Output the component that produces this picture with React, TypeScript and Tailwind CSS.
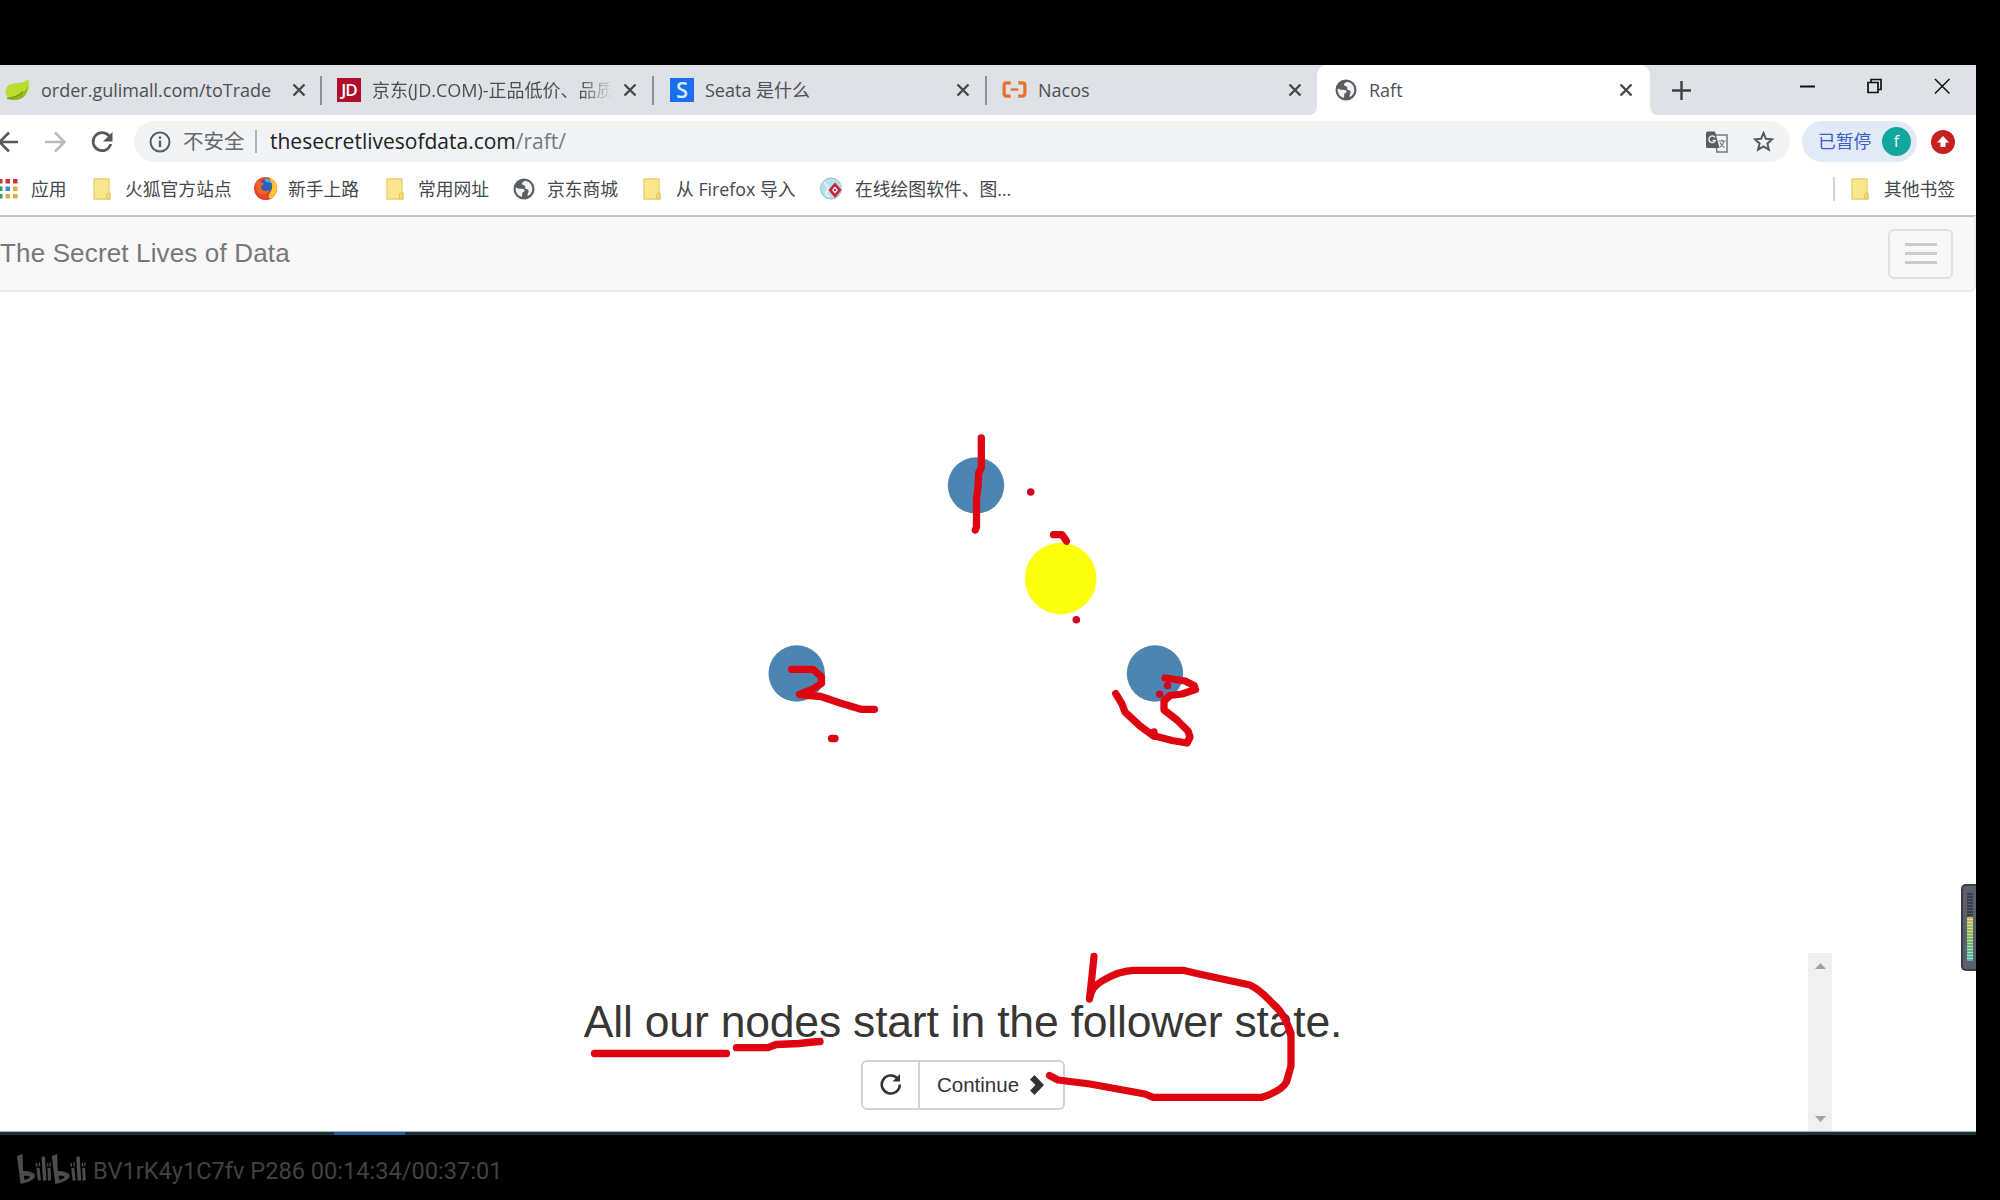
import type { ReactNode } from "react";

const uiFont = "font-['Open_Sans','Noto_Sans_CJK_SC',sans-serif]";

function CloseX() {
  return (
    <svg className="size-[14px] shrink-0" viewBox="0 0 14 14" fill="none" stroke="#45484c" strokeWidth="2.4">
      <path d="M1.5 1.5 12.5 12.5M12.5 1.5 1.5 12.5" />
    </svg>
  );
}

function Globe() {
  return (
    <svg className="h-[22px] w-[22px] shrink-0" viewBox="0 0 22 22">
      <circle cx="11" cy="11" r="10.5" fill="#5a5e62" />
      <path d="M2.800 9.500c3 2 6 .8 8 1.800 1.800 1 .6 2.500-.8 3-1.500.7-.5 2-1 4.500C5.500 18.500 1.800 14 2.800 9.500z" fill="#f1f2f3" />
      <path d="M12.500 2.700c-2.500 1-3.500 1.300-3.500 3 0 1.500 2 1 3 2.200.8 1.200-.5 2.600 1.500 3.200s2.300 1.400 2 2.900c-.3 1.200-1 1.800-1 4 3-1 4.800-4 4.800-7 0-4.500-3-7.500-6.800-8.300z" fill="#f1f2f3" />
    </svg>
  );
}

function Folder() {
  return (
    <svg className="h-[22px] w-[18px] shrink-0" viewBox="0 0 18 22">
      <path d="M1 1h15v13.500l1 1V21H1z" fill="#fce68d" stroke="#e6cf6c" strokeWidth="1.300" />
      <path d="M13.500 21v-5l1.500-1.500 2 1V21z" fill="#f6da70" stroke="#e0c75c" />
    </svg>
  );
}

function Tab({ className, icon, title, titleClass }: { className: string; icon: ReactNode; title: string; titleClass: string }) {
  return (
    <div className={"flex h-[50px] shrink-0 items-center pb-px " + className}>
      {icon}
      <span className={"overflow-hidden whitespace-nowrap pt-[2px] text-[#4c5054] " + titleClass}>{title}</span>
      <CloseX />
    </div>
  );
}

const divider = <div className="h-[29px] w-[2px] shrink-0 bg-[#8d9195]" />;

function TabBar() {
  return (
    <div className="flex h-[50px] items-center bg-[#dee1e5]">
      <Tab
        className="w-[320px] pl-[4px]"
        icon={
          <svg className="h-[24px] w-[26px] shrink-0" viewBox="0 0 26 24">
            <path d="M24.500 1C26 10 24 21 12 21.500 5 22 1 18 1.500 13 2 6 9 5.500 15 5c4-.4 7-1.500 9.500-4z" fill="#b9de2e" />
            <path d="M3 20.500c8 .5 17-3 21-13-1 9-5 14.500-13 14.500-3 0-6-.5-8-1.500z" fill="#8cb822" />
            <path d="M3 20.500c7-.5 12-2.500 16-7" stroke="#6f9a18" strokeWidth="1.500" fill="none" />
          </svg>
        }
        title="order.gulimall.com/toTrade"
        titleClass="ml-[11px] mr-[20px] w-[231px] text-[18px]"
      />
      {divider}
      <Tab
        className="w-[330px] pl-[15px]"
        icon={<div className="flex size-[24px] shrink-0 items-center justify-center bg-[#b00f2c] font-['Open_Sans'] text-[17px] font-semibold tracking-[-1px] text-white">JD</div>}
        title="京东(JD.COM)-正品低价、品质"
        titleClass="ml-[11px] mr-[11px] w-[240px] text-[18px] [mask-image:linear-gradient(to_right,black_87%,transparent)]"
      />
      {divider}
      <Tab
        className="w-[331px] pl-[16px]"
        icon={<div className="flex size-[24px] shrink-0 items-center justify-center bg-[#1a6ff0] font-['Open_Sans'] text-[22px] font-semibold text-[#d8ecff]">S</div>}
        title="Seata 是什么"
        titleClass="ml-[11px] mr-[11px] w-[240px] text-[18px]"
      />
      {divider}
      <Tab
        className="w-[330px] pl-[15px]"
        icon={
          <svg className="h-[17px] w-[25px] shrink-0" viewBox="0 0 26 18" fill="none" stroke="#e8702a" strokeWidth="3.400">
            <path d="M9 2H5Q2 2 2 5v8q0 3 3 3h4M17 2h4q3 0 3 3v8q0 3-3 3h-4" />
            <path d="M9 9h8" strokeWidth="2.500" />
          </svg>
        }
        title="Nacos"
        titleClass="ml-[11px] mr-[9px] w-[241px] text-[18px]"
      />
      <div className="relative w-[333px] shrink-0">
        <svg className="absolute -left-[9px] bottom-0 size-[9px]" viewBox="0 0 9 9"><path d="M9 0v9H0Q9 9 9 0z" fill="#fff" /></svg>
        <svg className="absolute -right-[9px] bottom-0 size-[9px]" viewBox="0 0 9 9"><path d="M0 0v9h9Q0 9 0 0z" fill="#fff" /></svg>
        <div className="h-[50px] rounded-t-[10px] bg-white">
          <Tab className="pl-[18px]" icon={<Globe />} title="Raft" titleClass="ml-[12px] mr-[11px] w-[239px] text-[18px]" />
        </div>
      </div>
      <svg className="ml-[22px] size-[19px] shrink-0" viewBox="0 0 19 19" stroke="#3c4043" strokeWidth="2.400">
        <path d="M9.500 0v19M0 9.500h19" />
      </svg>
      <svg className="mb-[8px] ml-[109px] h-[16px] w-[150px] shrink-0" viewBox="0 0 150 16" stroke="#111" fill="none" strokeWidth="1.700">
        <path d="M0 8.500h15" strokeWidth="2" />
        <path d="M68 4.500h10v10H68zM71 4V1.500h10v10h-2.500" />
        <path d="M135 1l14.500 14.500M149.500 1 135 15.500" strokeWidth="1.500" />
      </svg>
    </div>
  );
}

function Toolbar() {
  return (
    <div className="flex h-[53px] items-center bg-white">
      <svg className="h-[24px] w-[114px] shrink-0" viewBox="0 0 114 24" fill="none" stroke="#55585c" strokeWidth="2.500">
        <path d="M18 12H0M9 2.500-.5 12 9 21.500" />
        <path d="M45 12h18M55 2.500 64.500 12 55 21.500" stroke="#b9bbbd" />
        <path d="M109.500 6.500A9 9 0 1 0 110.800 14" strokeWidth="2.700" />
        <path d="M112.500 2v9.500h-9.500z" fill="#55585c" stroke="none" />
      </svg>
      <div className="ml-[20px] flex h-[41px] w-[1656px] shrink-0 items-center rounded-full bg-[#f1f3f4] pl-[15px]">
        <svg className="size-[22px] shrink-0" viewBox="0 0 22 22" fill="none" stroke="#5a5e62" strokeWidth="2">
          <circle cx="11" cy="11" r="9.500" />
          <path d="M11 9.500V16M11 5.500v2.300" strokeWidth="2.400" />
        </svg>
        <span className="ml-[12px] w-[62px] shrink-0 whitespace-nowrap text-[20.500px] text-[#65696d]">不安全</span>
        <div className="ml-[10px] h-[23px] w-[2px] bg-[#b0b3b6]" />
        <span className="ml-[13px] grow whitespace-nowrap text-[21px] text-[#202124]">
          thesecretlivesofdata.com<span className="text-[#777b7f]">/raft/</span>
        </span>
        <svg className="h-[22px] w-[22px] shrink-0" viewBox="0 0 22 22">
          <path d="M9 4h12V21H11z" fill="#f4f5f6" stroke="#74777a" strokeWidth="1.500" />
          <path d="M1.500.5H9l4.500 16.500h-12Q0 17 0 15.500V2Q0 .5 1.500.5z" fill="#5a5e62" />
          <path d="M9 6.500A3.300 3.300 0 1 0 9.300 9.500H6.500" stroke="#e4e6e8" strokeWidth="1.500" fill="none" />
          <path d="M12.500 10h7M16 8.500V10M18 10c-.5 3-2.500 5-4 6M14 11.500c1 2.500 3 4 4.500 5" stroke="#74777a" strokeWidth="1.200" fill="none" />
        </svg>
        <svg className="ml-[25px] mr-[16px] size-[21px] shrink-0" viewBox="0 0 21 21" fill="none" stroke="#55585c" strokeWidth="2">
          <path d="M10.500 2 12.900 7.800 19.200 8.300 14.400 12.400 15.900 18.600 10.500 15.300 5.100 18.600 6.600 12.400 1.800 8.300 8.100 7.800z" />
        </svg>
      </div>
      <div className="ml-[12px] flex h-[41px] w-[115px] shrink-0 items-center rounded-full bg-[#e2eaf8] pl-[16px]">
        <span className="w-[54px] whitespace-nowrap text-[17.800px] text-[#3a5fc4]">已暂停</span>
        <div className="ml-[10px] flex size-[29px] items-center justify-center rounded-full bg-[#12a79d] pb-px text-[16px] text-white">f</div>
      </div>
      <svg className="ml-[14px] size-[24px] shrink-0" viewBox="0 0 24 24">
        <circle cx="12" cy="12" r="12" fill="#c5221f" />
        <path d="M12 6l6 6.500h-3.500V17h-5v-4.500H6z" fill="#fff" />
      </svg>
    </div>
  );
}

function BookmarkText({ className, children }: { className: string; children: ReactNode }) {
  return <span className={"shrink-0 whitespace-nowrap pt-[2px] text-[17.800px] text-[#45484c] " + className}>{children}</span>;
}

function Bookmarks() {
  return (
    <div className="flex h-[47px] items-center bg-white pb-[6px]">
      <svg className="h-[20px] w-[18px] shrink-0" viewBox="0 0 18 20">
        <path d="M-2 0h4.500v4.500H-2zM5.500 0H10v4.500H5.500zM13 0h4.500v4.500H13z" fill="#c9303e" />
        <path d="M-2 7.500h4.500V12H-2zM-2 15h4.500v4.500H-2z" fill="#2f9d5c" />
        <path d="M5.500 7.500H10V12H5.500z" fill="#3f86d8" />
        <path d="M13 7.500h4.500V12H13zM5.500 15H10v4.500H5.500zM13 15h4.500v4.500H13z" fill="#e3ab45" />
      </svg>
      <BookmarkText className="ml-[13px] w-[62px]">应用</BookmarkText>
      <Folder />
      <BookmarkText className="ml-[14px] w-[129px]">火狐官方站点</BookmarkText>
      <svg className="size-[23px] shrink-0" viewBox="0 0 23 23">
        <circle cx="11.500" cy="11.500" r="11.500" fill="#ea452b" />
        <path d="M15 .7A11.500 11.500 0 0 1 18 21c-4 1-4-2-2-5s3-8-1-15.300z" fill="#fdc62f" />
        <path d="M11 2c5 0 8 4 7 9s-6 6-9 3S5 4 11 2z" fill="#2c62b4" />
        <path d="M10 1.500c3-.5 6 1 7.500 4.500L12 5z" fill="#43b3e6" />
        <path d="M3 3.500C5 5 8 5 10 7c-3 1-3.500 3-2.500 5 2 3.500 6 1.500 8 1-1.500 4-6 5.500-10 3.500C2 14 1.500 9 3 3.500z" fill="#f4642a" />
      </svg>
      <BookmarkText className="ml-[11px] w-[98px]">新手上路</BookmarkText>
      <Folder />
      <BookmarkText className="ml-[14px] w-[95px]">常用网址</BookmarkText>
      <Globe />
      <BookmarkText className="ml-[12px] w-[96px]">京东商城</BookmarkText>
      <Folder />
      <BookmarkText className="ml-[15px] w-[144px]">从 Firefox 导入</BookmarkText>
      <svg className="size-[23px] shrink-0" viewBox="0 0 23 23">
        <circle cx="11" cy="11.500" r="10.500" fill="#b9dfe8" stroke="#8fc0cc" />
        <path d="M4 6c4 1 5 5 3 8s0 5 3 6" stroke="#e3f3f6" strokeWidth="2" fill="none" />
        <path d="M15 5.500l6.500 7.500-6.500 8-6.500-8z" fill="#c8243c" />
        <path d="M15 9.500l3 3.500-3 3.500-3-3.500z" fill="#fff" />
        <circle cx="15" cy="13" r="1.300" fill="#c8243c" />
      </svg>
      <BookmarkText className="ml-[12px] grow">在线绘图软件、图...</BookmarkText>
      <div className="h-[24px] w-[2px] bg-[#d3d5d8]" />
      <div className="ml-[16px] flex items-center">
        <Folder />
      </div>
      <BookmarkText className="ml-[15px] w-[92px]">其他书签</BookmarkText>
    </div>
  );
}

function Stage() {
  return (
    <svg className="pointer-events-none absolute left-0 top-0 z-10 h-[1200px] w-[2000px]" viewBox="0 0 2000 1200">
      <g fill="#4c85b1">
        <circle cx="976" cy="485.500" r="28.200" />
        <circle cx="796.700" cy="673.500" r="28.200" />
        <circle cx="1155" cy="673.500" r="28.200" />
      </g>
      <circle cx="1060.700" cy="578.500" r="35.800" fill="#fcff0c" />
      <g fill="none" stroke="#de0511" strokeWidth="7.300" strokeLinecap="round" strokeLinejoin="round">
        <path d="M981.300 438v30l-2.600 5-.7 15-1.500 10v29l-1.200 3" />
        <path d="M1053.500 534.700h8.500l4.500 6.500" />
        <path d="M791.500 669.300H813L821.500 677V683.500L812 689.500 799.500 694.500 821 696.500 840 703 861 709.300H874.500" />
        <path d="M831.500 738.500h3.500" />
        <path d="M1115.700 693.700L1122 704 1125 712 1140 726 1153 735.500 1172 740.500 1187 743 1190 737 1188 731 1177 720 1164 710V701L1170 695.500 1182 694 1195.500 689.500 1194 685.500 1185 681 1165 678" />
        <path d="M1154 732v4" />
      </g>
      <g fill="#cc0720">
        <circle cx="1030.700" cy="492" r="3.800" />
        <circle cx="1076.300" cy="619.700" r="3.800" />
        <circle cx="1159.700" cy="694.300" r="3.800" />
        <circle cx="1167.500" cy="685.500" r="3.800" />
      </g>
      <g fill="none" stroke="#de0511" strokeWidth="7.300" strokeLinecap="round" strokeLinejoin="round">
        <path d="M594.500 1053.500h132" />
        <path d="M736.500 1047.700H768L776 1044.500 799 1043.500 813 1042 820 1041.500" />
        <path d="M1094 956.500L1092 976 1089.500 999C1091 990 1094 986 1102 981 1112 975 1122 970.300 1134 970.300H1183L1199 974 1250 985C1262 991 1267 998 1273 1004 1282 1011 1287 1022 1291 1033.500V1066L1286.500 1082C1282 1090 1272 1094 1262 1097.300H1153L1145 1094 1090 1084 1058 1080 1049.500 1075.500" />
      </g>
    </svg>
  );
}

function VolumeMeter() {
  return (
    <div className="absolute right-0 top-[819px] h-[87px] w-[15px] rounded-l-[5px] border-y-2 border-l-2 border-[#3a3d46] bg-[#5b606e] pl-[4px] pt-[7px]">
      <div className="h-[24px] w-[6px] bg-[repeating-linear-gradient(#3a3d48_0_2px,#555a68_2px_3px)]" />
      <div className="relative h-[44px] w-[6px] bg-linear-to-b from-[#c9b85a] via-[#7fb55e] to-[#4cb8a0]">
        <div className="absolute inset-0 bg-[repeating-linear-gradient(transparent_0_2px,#ffffff80_2px_3px)]" />
      </div>
    </div>
  );
}

function Page() {
  return (
    <div className="flex h-[916px] flex-col bg-white font-['Liberation_Sans',Arial,sans-serif]">
      <div className="flex h-[77px] shrink-0 items-center justify-between rounded-br-md border-b-2 border-r-2 border-t-2 border-b-[#ebebeb] border-r-[#ebebeb] border-t-[#c4c4c4] bg-[#f8f8f8]">
        <span className="whitespace-nowrap text-[26px] tracking-[0.15px] text-[#777]">The Secret Lives of Data</span>
        <div className="mr-[21px] flex h-[50px] w-[65px] flex-col items-center justify-center gap-[6px] rounded-[6px] border-2 border-[#e0e0e0]">
          <div className="h-[3px] w-[32px] bg-[#cbcbcb]" />
          <div className="h-[3px] w-[32px] bg-[#cbcbcb]" />
          <div className="h-[3px] w-[32px] bg-[#cbcbcb]" />
        </div>
      </div>
      <div className="mt-auto flex h-[178px] shrink-0 pl-[118px]">
        <div className="flex grow flex-col items-center pt-[44px]">
          <h1 className="whitespace-nowrap text-[44.500px] leading-[50px] tracking-[-0.200px] text-[#383634]">All our nodes start in the follower state.</h1>
          <div className="mt-[13px] flex h-[50px] w-[204px] rounded-[6px] border-2 border-[#d2d2d2] text-[#333]">
            <div className="flex w-[57px] items-center justify-center border-r-2 border-[#d2d2d2]">
              <svg className="mb-[3px] size-[22px]" viewBox="0 0 22 22" fill="none" stroke="#333" strokeWidth="2.600">
                <path d="M17.500 5.500A9 9 0 1 0 19.800 11.500" />
                <path d="M20 1v7.500h-7.500z" fill="#333" stroke="none" />
              </svg>
            </div>
            <div className="flex grow items-center pl-[17px]">
              <span className="w-[83px] whitespace-nowrap text-[20.500px]">Continue</span>
              <svg className="ml-[10px] h-[20px] w-[14px]" viewBox="0 0 14 20">
                <path d="M4.500 0 14 10 4.500 20 0 15.500 5.500 10 0 4.500z" fill="#333" />
              </svg>
            </div>
          </div>
        </div>
        <div className="flex w-[24px] shrink-0 flex-col items-center justify-between bg-[#f0f0f0] pb-[9px] pt-[10px]">
          <svg className="h-[6px] w-[11px]" viewBox="0 0 11 6"><path d="M0 6 5.500 0 11 6z" fill="#a3a3a3" /></svg>
          <svg className="h-[6px] w-[11px]" viewBox="0 0 11 6"><path d="M0 0 5.500 6 11 0z" fill="#a3a3a3" /></svg>
        </div>
        <div className="w-[144px] shrink-0" />
      </div>
    </div>
  );
}

function BilibiliLogo() {
  return (
    <svg className="h-[32px] w-[70px] shrink-0" viewBox="0 0 70 34" preserveAspectRatio="none" fill="#4c4c4c">
      <g id="half">
        <path fillRule="evenodd" d="M0 2 5.500 0 6 18c6 0 12 2 12 5 0 4-8 8-14.500 8.500zM7 23l.5 4.500c3-.8 5.500-2 5.500-3S10 23 7 23z" />
        <path d="M19.500 15l3-.3L24 28l-3 .4zM24.500 3l3.500-.3L29.500 28l-3.500.3zM30.500 15l3-.3L34 28l-3 .4zM18.500 9.500l1.500-.3.5 4-1.500.3zM21.500 9l1.500-.3.3 4-1.500.3zM30 9.500l1.300-.3.3 4-1.300.3zM32.500 9l1.300-.3.2 4-1.300.3z" />
      </g>
      <use href="#half" x="34.700" />
    </svg>
  );
}

export default function App() {
  return (
    <div className={"relative flex h-[1200px] w-[2000px] flex-col overflow-hidden bg-black pt-[65px] " + uiFont}>
      <div className="relative w-[1976px]">
        <TabBar />
        <Toolbar />
        <Bookmarks />
        <Page />
        <VolumeMeter />
        <div className="h-[4px] border-t border-[#9fb2bd] bg-[#1b2f3d]">
          <div className="ml-[334px] h-[3px] w-[71px] bg-[#1f5f96]" />
        </div>
      </div>
      <div className="flex grow items-center pl-[17px] pt-[5px]">
        <BilibiliLogo />
        <span className="ml-[6px] mt-[3px] whitespace-nowrap font-['Roboto'] text-[23.600px] text-[#424242]">BV1rK4y1C7fv P286 00:14:34/00:37:01</span>
      </div>
      <Stage />
    </div>
  );
}
